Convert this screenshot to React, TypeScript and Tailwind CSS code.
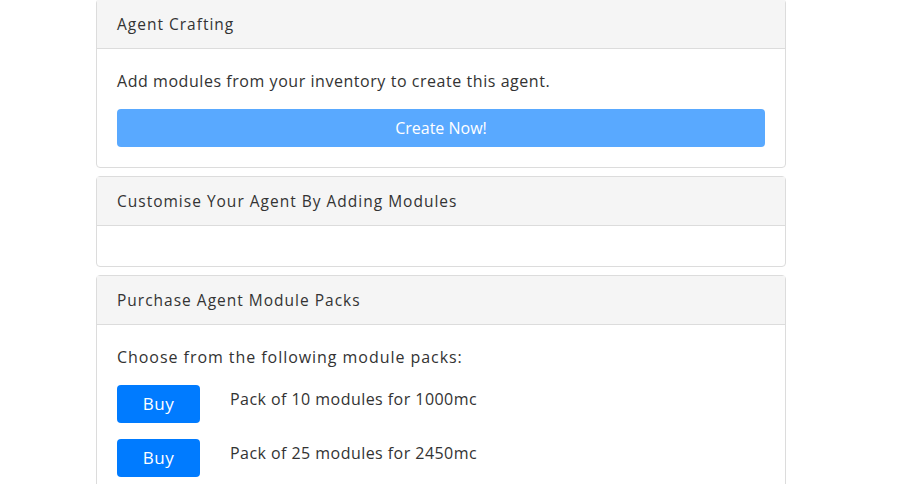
import React from 'react';

const packs = [
  { size: 10, price: 1000 },
  { size: 25, price: 2450 },
];

const Card = ({ title, children }: { title: string; children?: React.ReactNode }) => (
  <div className="mb-2 rounded border border-[#dcdcdc] bg-white">
    <div className="border-b border-[#dcdcdc] bg-[#f5f5f5] px-5 py-3 text-[15.5px] leading-6 tracking-[1px] text-[#333]">
      {title}
    </div>
    <div className="p-5">{children}</div>
  </div>
);

export default function App() {
  return (
    <div
      className="min-h-screen bg-white text-[#333]"
      style={{ fontFamily: '"Open Sans", "Liberation Sans", sans-serif' }}
    >
      <div className="ml-[96px] -mt-px w-[690px]">
        <Card title="Agent Crafting">
          <p className="mb-4 text-base leading-6 tracking-[0.55px]">Add modules from your inventory to create this agent.</p>
          <button className="h-[38px] w-full rounded bg-[#59a9ff] text-base text-white">Create Now!</button>
        </Card>

        <Card title="Customise Your Agent By Adding Modules" />

        <Card title="Purchase Agent Module Packs">
          <p className="mb-4 text-base leading-6 tracking-[0.95px]">Choose from the following module packs:</p>
          <div className="flex flex-col gap-4">
            {packs.map((p) => (
              <div key={p.size} className="flex items-start">
                <button className="h-[38px] w-[83px] shrink-0 rounded bg-[#007bff] text-[17px] tracking-[0.5px] text-white">Buy</button>
                <span className="ml-[30px] mt-[2px] text-base leading-6 tracking-[0.45px]">
                  Pack of {p.size} modules for {p.price}mc
                </span>
              </div>
            ))}
          </div>
        </Card>
      </div>
    </div>
  );
}
